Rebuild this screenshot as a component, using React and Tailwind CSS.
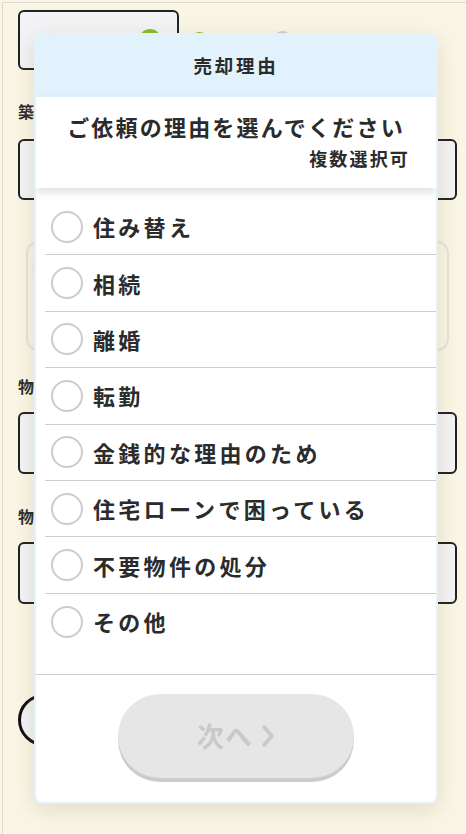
import React from 'react';

const reasons = [
  '住み替え',
  '相続',
  '離婚',
  '転勤',
  '金銭的な理由のため',
  '住宅ローンで困っている',
  '不要物件の処分',
  'その他',
];

const font = { fontFamily: '"Noto Sans CJK JP", "Noto Sans", sans-serif' };

const App = () => {
  return (
    <div className="relative w-[466px] min-h-[834px] bg-[#faf6e6] overflow-hidden text-[#2b2b2b]" style={font}>
      {/* form underneath the dialog */}
      <div className="ml-[2px] mt-[2px] min-h-[832px] border-l border-t border-[#dedad0] pl-[15px] pr-[9px] pt-[7px]">
        <div className="flex items-center">
          <div className="w-[161px] h-[60px] rounded-md border-2 border-[#222] bg-[#f3f3f6] flex items-center justify-between px-4">
            <span className="text-[18px] font-bold">2</span>
            <span className="w-[22px] h-[22px] rounded-full bg-[#8dbb2d]"></span>
          </div>
          <div className="flex items-center gap-3 ml-3">
            <span className="w-[17px] h-[17px] rounded-full bg-[#8dbb2d]"></span>
            <span className="text-[15px] font-bold">WEB</span>
            <span className="w-[19px] h-[19px] rounded-full border-2 border-[#ccc] bg-white ml-2"></span>
            <span className="text-[15px] font-bold">電話</span>
          </div>
        </div>

        <div className="mt-[29px] text-[16px] font-bold leading-6">築年数</div>
        <div className="mt-[16px] h-[61px] rounded-md border-2 border-[#222] bg-[#f3f3f6]"></div>

        <div className="mt-[41px] mx-[8px] h-[110px] rounded-xl border-2 border-[#e6e2dc] p-1">
          <div className="w-[120px] h-[46px] rounded-full bg-[#eeeef8]"></div>
        </div>

        <div className="mt-[23px] text-[16px] font-bold leading-6">物件所在地</div>
        <div className="mt-[14px] h-[62px] rounded-md border-2 border-[#222] bg-[#f3f3f6]"></div>

        <div className="mt-[30px] text-[16px] font-bold leading-6">物件種別</div>
        <div className="mt-[14px] h-[62px] rounded-md border-2 border-[#222] bg-[#f3f3f6]"></div>

        <div className="mt-[90px] w-[120px] h-[52px] rounded-full border-[3px] border-[#111] bg-[#f3f3f6]"></div>
      </div>

      {/* dialog */}
      <div className="absolute left-[34px] top-[33px] w-[404px] rounded-lg border-2 border-[#e2f2fc] bg-white overflow-hidden shadow-[0_6px_22px_rgba(120,100,40,0.18)]">
        <div className="h-[62px] bg-[#e2f2fc] flex items-center justify-center">
          <span className="text-[18.5px] font-bold tracking-[0.15em]">売却理由</span>
        </div>

        <div className="relative z-10 h-[91px] bg-white shadow-[0_4px_8px_rgba(0,0,0,0.13)]">
          <div className="pt-[14px] text-center text-[22px] leading-[30px] font-bold tracking-[0.1em]">
            ご依頼の理由を選んでください
          </div>
          <div className="mt-[5px] pr-[26px] text-right text-[18px] leading-6 font-bold tracking-[0.12em]">
            複数選択可
          </div>
        </div>

        <div className="pt-[11px] pb-[24px] pl-[9px]">
          {reasons.map((r, i) => (
            <div
              key={i}
              className={`h-[56.4px] flex items-center ${i < reasons.length - 1 ? 'border-b border-[#cfcfcf]' : ''}`}
            >
              <span className="ml-[6px] w-[32px] h-[32px] rounded-full border-2 border-[#cccccc] bg-white shrink-0"></span>
              <span className="ml-[10px] text-[22px] font-bold tracking-[0.15em]">{r}</span>
            </div>
          ))}
        </div>

        <div className="border-t border-[#cccccc] pt-[19px] pb-[24px] flex justify-center">
          <button className="w-[236px] h-[84px] rounded-full bg-[#e6e6e6] shadow-[0_4px_0_#cccccc] flex items-center justify-center gap-2 text-[#c9c9c9]">
            <span className="text-[27px] font-bold tracking-[0.05em]">次へ</span>
            <svg width="14" height="24" viewBox="0 0 14 24" fill="none">
              <path d="M3 3l8 9-8 9" stroke="#c9c9c9" strokeWidth="3.5" strokeLinecap="round" strokeLinejoin="round" />
            </svg>
          </button>
        </div>
      </div>
    </div>
  );
};

export default App;
